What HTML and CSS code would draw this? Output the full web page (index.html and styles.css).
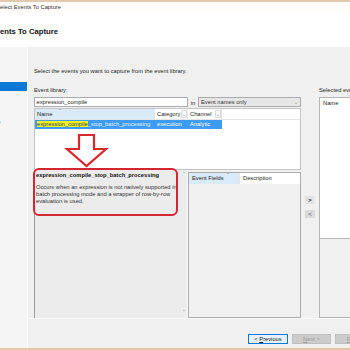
FILE: index.html
```html
<!DOCTYPE html>
<html lang="en">
<head>
  <meta charset="UTF-8">
  <title>New Session - Select Events To Capture</title>
  <link rel="stylesheet" href="styles.css">
</head>
<body>
  <div class="window">
    <div class="topline"></div>
    <div class="titlebar">
      <span class="title-text">Select Events To Capture</span>
    </div>
    <div class="header">
      <h1 class="page-title">Events To Capture</h1>
    </div>

    <div class="main">
      <div class="nav">
        <div class="nav-list">
          <div class="nav-item">Introduction</div>
          <div class="nav-item selected">Events To Capture</div>
          <div class="nav-item">Capture Options</div>
          <div class="nav-item">Set Session Event Filters</div>
          <div class="nav-item">Specify Session Data Storage</div>
          <div class="nav-item">Summary</div>
        </div>
      </div>

      <div class="page">
        <div class="page-body">
          <p class="intro">Select the events you want to capture from the event library.</p>

          <div class="columns">
            <div class="library">
              <div class="label">Event library:</div>
              <div class="search-row">
                <div class="textbox">expression_compile</div>
                <span class="in-label">in</span>
                <div class="combo">
                  <span>Event names only</span>
                  <span class="combo-arrow">&#8964;</span>
                </div>
              </div>

              <div class="grid">
                <div class="grid-head">
                  <div class="col col-name sorted">Name<span class="sort">&#710;</span></div>
                  <div class="col col-cat">Category<span class="drop">&#8964;</span></div>
                  <div class="col col-chan">Channel<span class="drop">&#8964;</span></div>
                </div>
                <div class="grid-row active">
                  <div class="col col-name"><mark>expression_compile</mark>_stop_batch_processing</div>
                  <div class="col col-cat">execution</div>
                  <div class="col col-chan">Analytic</div>
                </div>
              </div>

              <div class="lower">
                <div class="details">
                  <div class="details-text">
                    <div class="details-title">expression_compile_stop_batch_processing</div>
                    <p class="details-desc">Occurs when an expression is not natively supported in<br>batch processing mode and a wrapper of row-by-row<br>evaluation is used.</p>
                  </div>
                  <div class="scroll-track">
                    <span>&#710;</span>
                    <span>&#711;</span>
                  </div>
                </div>
                <div class="fields">
                  <div class="fields-head">
                    <div class="fcol fcol-name">Event Fields<span class="sort">&#710;</span></div>
                    <div class="fcol fcol-desc">Description</div>
                  </div>
                </div>
              </div>
            </div>

            <div class="movers">
              <div class="move-btn">&gt;</div>
              <div class="move-btn dim">&lt;</div>
            </div>

            <div class="selected-col">
              <div class="label">Selected events:</div>
              <div class="selected-box">
                <div class="selected-head">Name</div>
              </div>
              <div class="selected-info"></div>
            </div>
          </div>

          <div class="callout"></div>
          <svg class="callout-arrow" width="52" height="40" viewBox="0 0 52 40">
            <path d="M19 5 L34 5 L34 19 L46 19 L26.5 36 L7 19 L19 19 Z" fill="#ffffff" stroke="#d8292f" stroke-width="2.2" stroke-linejoin="miter"/>
          </svg>
        </div>

        <div class="footer">
          <div class="btn primary">&lt; <u>P</u>revious</div>
          <div class="btn disabled"><u>N</u>ext &gt;</div>
          <div class="btn disabled"><u>F</u>inish</div>
        </div>
      </div>
    </div>
    <div class="bottomline"></div>
  </div>
</body>
</html>
```

FILE: styles.css
```css
* {
  margin: 0;
  padding: 0;
  box-sizing: border-box;
}

body {
  width: 350px;
  height: 350px;
  overflow: hidden;
  font-family: 'Liberation Sans', Arial, sans-serif;
  font-size: 5.75px;
  line-height: 7px;
  color: #1e1e1e;
  background: #f0f0f0;
}

.window {
  width: 350px;
  height: 350px;
  display: flex;
  flex-direction: column;
  overflow: hidden;
}

.topline {
  height: 2px;
  background: #e2c9b2;
}

.titlebar {
  height: 12px;
  background: #fffcf9;
  white-space: nowrap;
  overflow: hidden;
  padding-top: 2px;
}

.title-text {
  display: inline-block;
  margin-left: -3.8px;
  color: #333333;
}

.header {
  height: 33px;
  background: #ffffff;
  padding-top: 13px;
  white-space: nowrap;
  overflow: hidden;
}

.page-title {
  font-size: 7.7px;
  line-height: 10px;
  font-weight: bold;
  margin-left: -9.4px;
  color: #111111;
}

.main {
  flex: 1;
  display: flex;
  min-height: 0;
}

/* left step list, only its right edge is in view */
.nav {
  width: 28px;
  flex-shrink: 0;
  background: #f5f5f5;
  border-right: 1px solid #ffffff;
  overflow: hidden;
}

.nav-list {
  margin-left: -80px;
  width: 107px;
  padding-top: 23px;
}

.nav-item {
  height: 9px;
  line-height: 9px;
  margin-bottom: 3px;
  padding-left: 4px;
  white-space: nowrap;
  color: #222222;
}

.nav-item.selected {
  background: #0f78d6;
  color: #ffffff;
}

.page {
  flex: 1;
  min-width: 0;
  display: flex;
  flex-direction: column;
  overflow: hidden;
}

.page-body {
  position: relative;
  height: 271px;
  padding: 21px 0 0 6px;
}

.intro {
  white-space: nowrap;
  margin-bottom: 12px;
}

.columns {
  display: flex;
}

.label {
  white-space: nowrap;
  margin-bottom: 3px;
}

.library {
  width: 267px;
  flex-shrink: 0;
}

.search-row {
  display: flex;
  align-items: center;
  height: 10px;
  margin-bottom: 1px;
}

.textbox {
  width: 154px;
  height: 10px;
  line-height: 8px;
  background: #ffffff;
  border: 1px solid #a9abb0;
  padding-left: 1.5px;
}

.in-label {
  width: 10px;
  text-align: center;
  padding-top: 2px;
}

.combo {
  flex: 1;
  height: 10px;
  line-height: 8px;
  background: #e6e6e6;
  border: 1px solid #adadad;
  padding: 0 2px;
  display: flex;
  justify-content: space-between;
  color: #333333;
}

.combo-arrow {
  color: #777777;
  font-size: 5px;
}

.grid {
  height: 62px;
  background: #ffffff;
  border: 1px solid #c4c4c4;
}

.grid-head,
.grid-row {
  display: flex;
  height: 10px;
  line-height: 10px;
  white-space: nowrap;
}

.grid-head {
  border-bottom: 1px solid #e4e4e4;
  height: 11px;
}

.col {
  overflow: hidden;
  padding-left: 2px;
  position: relative;
}

.col-name {
  width: 120px;
}

.col-cat {
  width: 33px;
}

.col-chan {
  width: 34px;
}

.grid-head .col {
  border-right: 1px solid #e4e4e4;
}

.grid-head .col.sorted {
  background: #d9ebf9;
}

.sort {
  position: absolute;
  top: -3px;
  left: 24px;
  color: #8a8a8a;
}

.drop {
  position: absolute;
  right: 0;
  top: 1px;
  width: 6px;
  height: 8px;
  line-height: 7px;
  text-align: center;
  background: #f7f7f7;
  border: 1px solid #dddddd;
  color: #888888;
  font-size: 4.5px;
}

.grid-row.active {
  width: 187px;
  height: 9px;
  line-height: 9px;
  background: #3d9bf1;
  color: #ffffff;
}

.grid-row.active .col-name {
  color: #e6f2ff;
}

mark {
  background: #f4f41f;
  color: #1c3a6b;
}

.lower {
  display: flex;
  height: 148px;
}

.details {
  width: 154px;
  display: flex;
  background: #ececec;
  border-left: 1px solid #9c9c9c;
}

.details-text {
  flex: 1;
  padding: 2px 0 0 1px;
  white-space: nowrap;
}

.details-title {
  font-weight: bold;
  color: #111111;
}

.details-desc {
  margin-top: 5px;
  color: #333333;
}

.scroll-track {
  width: 7px;
  display: flex;
  flex-direction: column;
  justify-content: space-between;
  align-items: center;
  color: #a0a0a0;
  padding: 1px 0 2px;
  border-right: 1px solid #f8f8f8;
}

.fields {
  flex: 1;
  margin-top: 2px;
  border: 1px solid #acacac;
  background: #f0f0f0;
}

.fields-head {
  display: flex;
  height: 11px;
  line-height: 10px;
  background: #ffffff;
  white-space: nowrap;
}

.fcol {
  position: relative;
  padding-left: 3px;
}

.fcol-name {
  width: 51px;
  background: #d9ebf9;
  border-right: 1px solid #e4e4e4;
}

.fcol-name .sort {
  left: 38px;
}

.fcol-desc {
  flex: 1;
}

.movers {
  width: 18px;
  flex-shrink: 0;
  display: flex;
  flex-direction: column;
  align-items: center;
  padding-top: 109px;
  gap: 6px;
}

.move-btn {
  width: 10px;
  height: 8px;
  line-height: 8px;
  text-align: center;
  background: #e3e3e3;
  font-weight: bold;
  color: #222222;
}

.move-btn.dim {
  background: #dadada;
  color: #777777;
}

.selected-col {
  width: 110px;
  flex-shrink: 0;
}

.selected-box {
  height: 142px;
  background: #ffffff;
  border: 1px solid #b5b5b5;
  padding: 2px 0 0 3px;
}

.selected-info {
  height: 79px;
  border: 1px solid #b5b5b5;
  border-top: none;
}

/* annotation drawn over the dialog */
.callout {
  position: absolute;
  left: 5px;
  top: 121px;
  width: 145px;
  height: 48px;
  border: 2px solid #d42532;
  border-radius: 6px;
}

.callout-arrow {
  position: absolute;
  left: 32px;
  top: 83px;
}

.footer {
  height: 30px;
  display: flex;
  gap: 4px;
  padding: 15px 0 0 220px;
  border-top: 1px solid #fafafa;
}

.btn {
  flex-shrink: 0;
  width: 40px;
  height: 10px;
  line-height: 8px;
  text-align: center;
  white-space: nowrap;
  border: 1px solid #adadad;
}

.btn.primary {
  background: #e5f1fb;
  border-color: #0078d7;
  color: #1a1a1a;
}

.btn.disabled {
  width: 39px;
  background: #cccccc;
  border-color: #bfbfbf;
  color: #9a9a9a;
}

.bottomline {
  height: 2px;
  background: #e6c4a8;
}
```
